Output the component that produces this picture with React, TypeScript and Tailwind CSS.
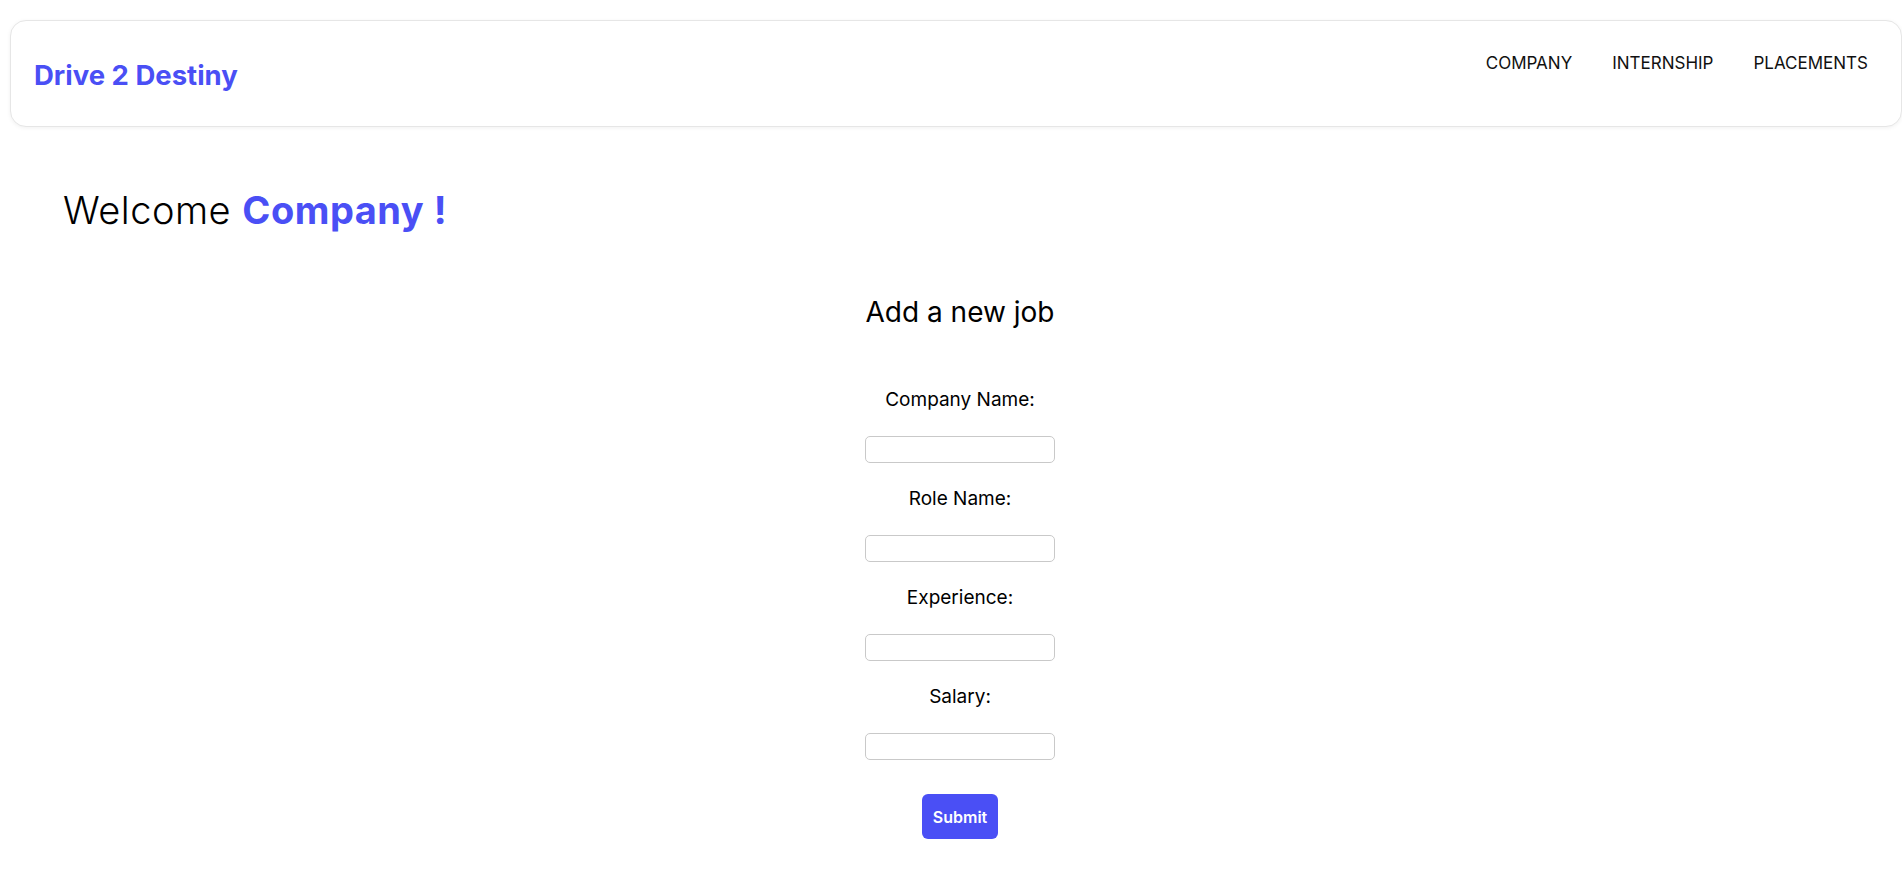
import { useState } from 'react';

const navLinks = ['COMPANY', 'INTERNSHIP', 'PLACEMENTS'];

const fields = [
  { key: 'company', label: 'Company Name:' },
  { key: 'role', label: 'Role Name:' },
  { key: 'experience', label: 'Experience:' },
  { key: 'salary', label: 'Salary:' },
];

export default function App() {
  const [form, setForm] = useState<Record<string, string>>({ company: '', role: '', experience: '', salary: '' });

  const handleSubmit = (e: React.FormEvent) => {
    e.preventDefault();
  };

  return (
    <div className="min-h-screen bg-white text-black font-['Inter',sans-serif]">
      <nav className="ml-[10px] mt-[20px] h-[107px] rounded-2xl border border-[#e6e6e6] shadow-[0_1px_4px_rgba(0,0,0,0.06)] bg-white flex items-center justify-between pl-[23px] pr-[33px]">
        <a href="#" className="text-[27.5px] leading-[32px] font-bold text-[#4a4ff5] mt-[2px]">Drive 2 Destiny</a>
        <ul className="flex items-center gap-[40px] pb-[22px]">
          {navLinks.map(link => (
            <li key={link}>
              <a href="#" className="text-[17px] leading-[24px] text-[#111]">{link}</a>
            </li>
          ))}
        </ul>
      </nav>

      <main>
        <h1 className="mt-[63px] pl-[63px] text-[38px] leading-[40px] font-light tracking-[0.5px]">
          Welcome <span className="font-bold text-[#4a4ff5]">Company !</span>
        </h1>

        <div className="flex justify-center pl-[18px]">
          <form onSubmit={handleSubmit} className="flex flex-col items-center w-[190px]">
            <h2 className="mt-[66px] text-[28px] leading-[32px] whitespace-nowrap">Add a new job</h2>
            <div className="mt-[60px] flex flex-col items-center">
              {fields.map((f, i) => (
                <div key={f.key} className={`flex flex-col items-center ${i > 0 ? 'mt-[24px]' : ''}`}>
                  <label htmlFor={f.key} className="text-[19px] leading-[24px] whitespace-nowrap">{f.label}</label>
                  <input
                    id={f.key}
                    type="text"
                    value={form[f.key]}
                    onChange={(e) => setForm(prev => ({ ...prev, [f.key]: e.target.value }))}
                    className="mt-[24px] w-[190px] h-[27px] rounded-[5px] border border-[#c9c9c9] px-2 text-sm focus:outline-none"
                  />
                </div>
              ))}
            </div>
            <button type="submit" className="mt-[34px] w-[76px] h-[45px] rounded-[6px] bg-[#4a4ff5] text-white text-[16px] font-semibold">
              Submit
            </button>
          </form>
        </div>
      </main>
    </div>
  );
}
